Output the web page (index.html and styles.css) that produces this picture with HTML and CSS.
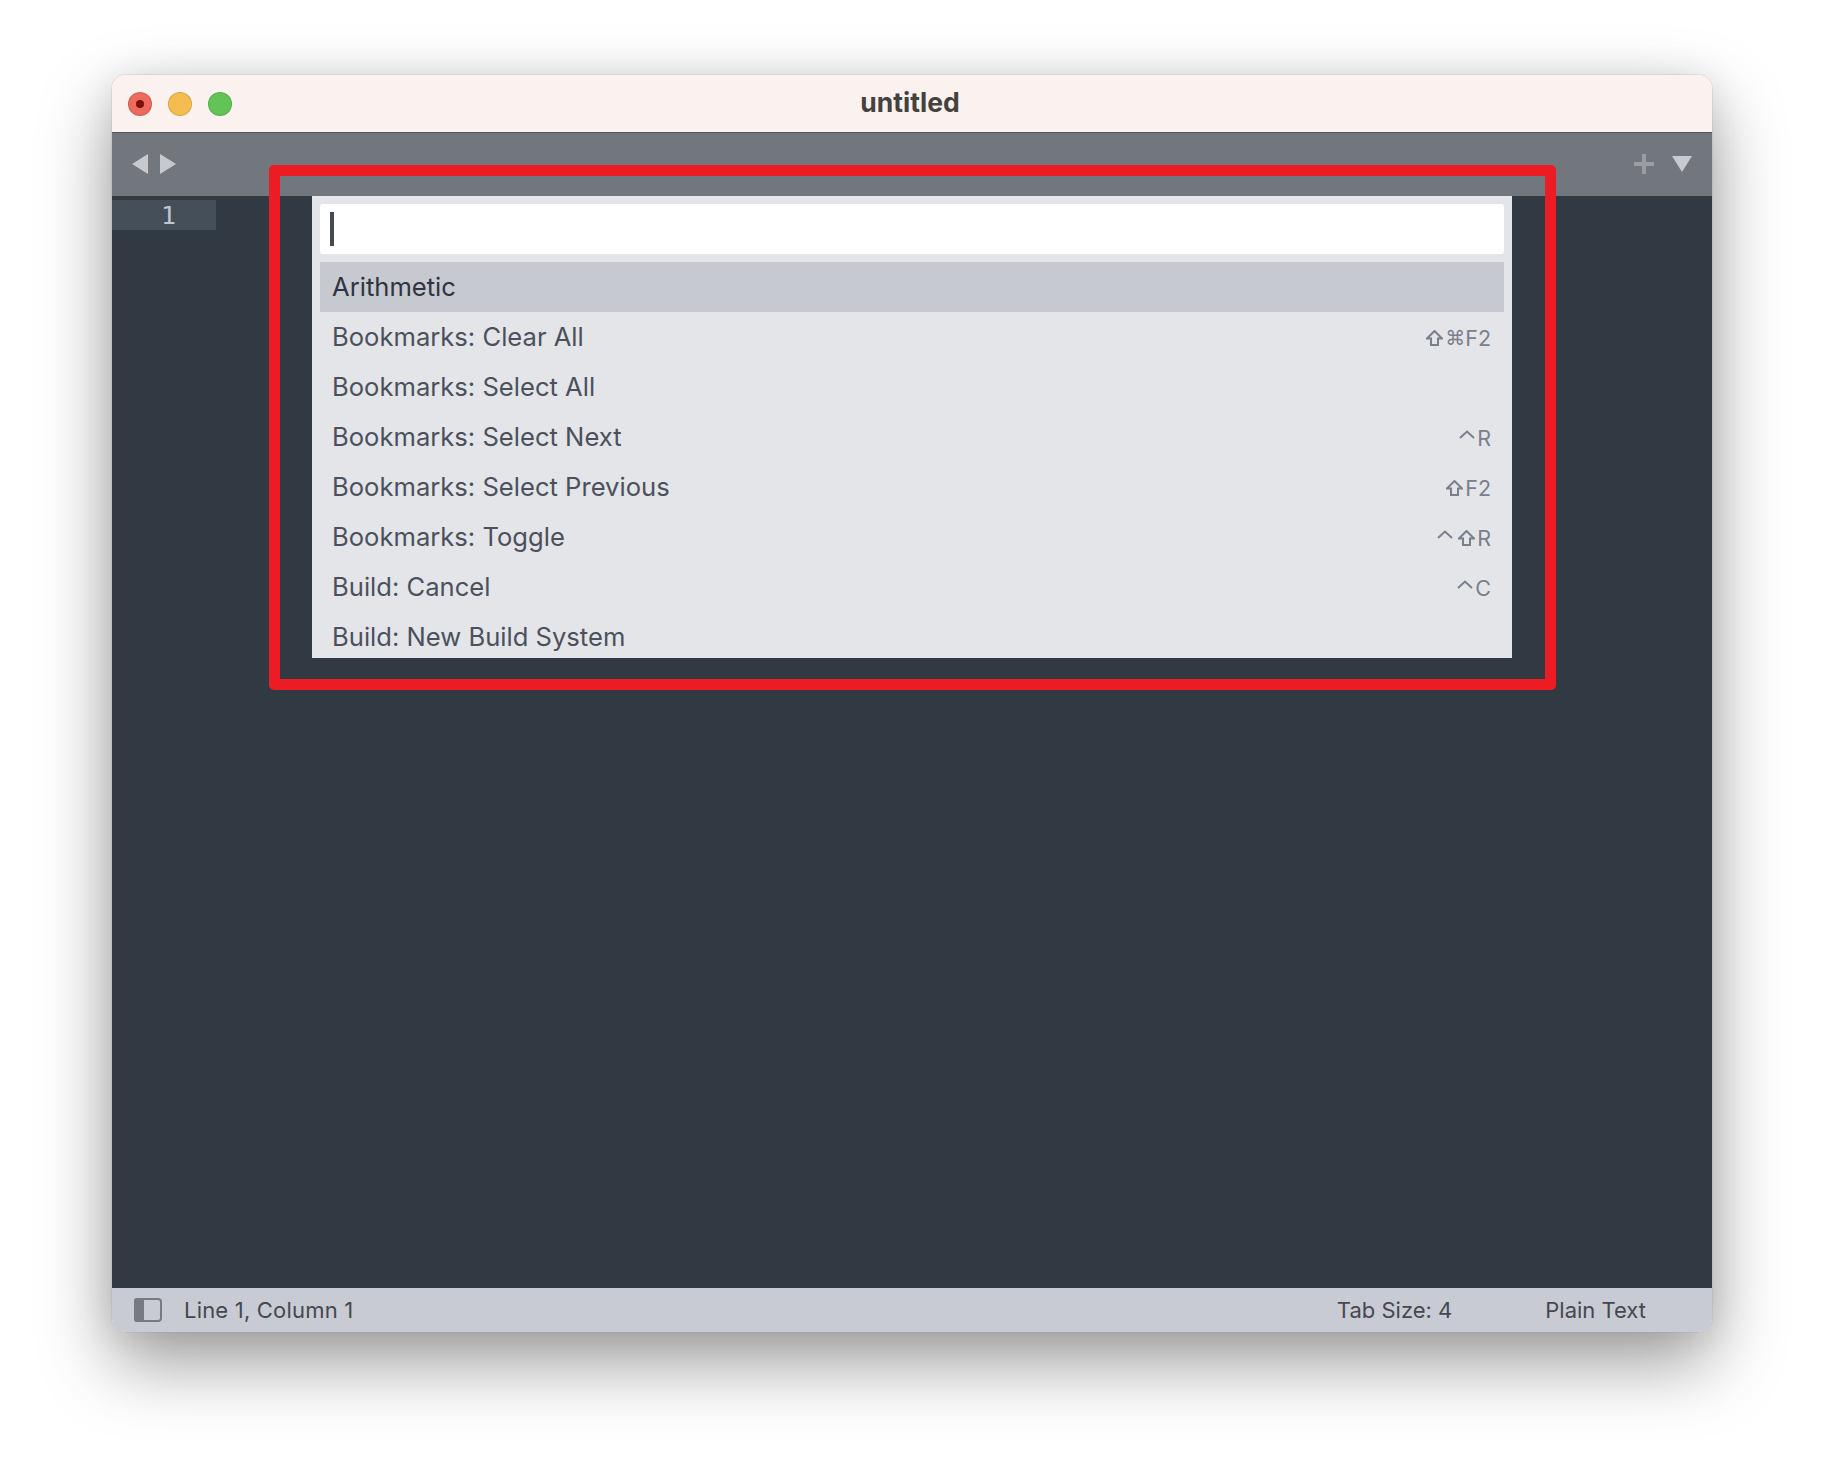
FILE: index.html
```html
<!DOCTYPE html>
<html lang="en">
<head>
<meta charset="utf-8">
<title>untitled</title>
<link rel="stylesheet" href="styles.css">
</head>
<body>
<main class="window">
  <header class="titlebar">
    <div class="lights">
      <span class="light light-close"><span class="light-dot"></span></span>
      <span class="light light-min"></span>
      <span class="light light-max"></span>
    </div>
    <div class="title">untitled</div>
    <div class="titlebar-end"></div>
  </header>
  <div class="tabbar">
    <div class="nav">
      <svg class="icon-nav" width="16" height="20" viewBox="0 0 16 20"><path d="M0 10 16 0V20Z"/></svg>
      <svg class="icon-nav" width="16" height="20" viewBox="0 0 16 20"><path d="M16 10 0 0V20Z"/></svg>
    </div>
    <div class="tab-actions">
      <svg class="icon-plus" width="20" height="20" viewBox="0 0 20 20"><path d="M8 0h4v8h8v4h-8v8H8v-8H0V8h8Z"/></svg>
      <svg class="icon-down" width="20" height="16" viewBox="0 0 20 16"><path d="M0 0H20L10 16Z"/></svg>
    </div>
  </div>
  <div class="editor">
    <div class="gutter-line">1</div>
  </div>
  <footer class="statusbar">
    <svg class="icon-sidebar" width="28" height="24" viewBox="0 0 28 24">
      <rect x="1" y="1" width="26" height="22" rx="3" fill="none" stroke="#777b81" stroke-width="2"/>
      <path d="M3 0H10V24H3A3 3 0 0 1 0 21V3A3 3 0 0 1 3 0Z" fill="#777b81"/>
    </svg>
    <span class="status-pos">Line 1, Column 1</span>
    <span class="status-tab">Tab Size: 4</span>
    <span class="status-syntax">Plain Text</span>
  </footer>

  <section class="palette">
    <div class="palette-input"><span class="caret"></span></div>
    <ul class="palette-list">
      <li class="row row-selected"><span>Arithmetic</span></li>
      <li class="row"><span>Bookmarks: Clear All</span>
        <span class="keys"><svg class="k-shift" width="17" height="16" viewBox="0 0 17 16"><path d="M8.5 1 16 8.5H12V15H5V8.5H1Z"/></svg><span class="k-cmd">⌘</span>F2</span></li>
      <li class="row"><span>Bookmarks: Select All</span></li>
      <li class="row"><span>Bookmarks: Select Next</span>
        <span class="keys"><svg class="k-ctrl" width="16" height="9" viewBox="0 0 16 9"><path d="M1 8 8 1.500 15 8"/></svg>R</span></li>
      <li class="row"><span>Bookmarks: Select Previous</span>
        <span class="keys"><svg class="k-shift" width="17" height="16" viewBox="0 0 17 16"><path d="M8.5 1 16 8.5H12V15H5V8.5H1Z"/></svg>F2</span></li>
      <li class="row"><span>Bookmarks: Toggle</span>
        <span class="keys"><svg class="k-ctrl k-ctrl-gap" width="16" height="9" viewBox="0 0 16 9"><path d="M1 8 8 1.500 15 8"/></svg><svg class="k-shift" width="17" height="16" viewBox="0 0 17 16"><path d="M8.5 1 16 8.500H12V15H5V8.500H1Z"/></svg>R</span></li>
      <li class="row"><span>Build: Cancel</span>
        <span class="keys"><svg class="k-ctrl" width="16" height="9" viewBox="0 0 16 9"><path d="M1 8 8 1.500 15 8"/></svg>C</span></li>
      <li class="row"><span>Build: New Build System</span></li>
    </ul>
  </section>

  <div class="annotation"></div>
</main>
</body>
</html>
```

FILE: styles.css
```css
* { box-sizing: border-box; }
html, body { margin: 0; background: #fff; }
body {
  width: 1824px;
  height: 1480px;
  padding: 75px 112px 0;
  font-family: Inter, "Liberation Sans", sans-serif;
  overflow: hidden;
}
.window {
  position: relative;
  width: 1600px;
  height: 1257px;
  display: flex;
  flex-direction: column;
  border-radius: 14px;
  box-shadow: 0 0 0 1px rgba(150, 150, 150, .18), 0 30px 72px rgba(0, 0, 0, .4), 0 0 36px rgba(0, 0, 0, .07);
}
.titlebar {
  flex: 0 0 58px;
  display: grid;
  grid-template-columns: 1fr auto 1fr;
  align-items: center;
  background: #fbf1ee;
  border-bottom: 1px solid #54575c;
  border-radius: 14px 14px 0 0;
}
.lights { display: flex; gap: 16px; padding-left: 16px; }
.light {
  width: 24px;
  height: 24px;
  border-radius: 50%;
  display: flex;
  align-items: center;
  justify-content: center;
  border: 1px solid rgba(0, 0, 0, .12);
}
.light-close { background: #ee6a5f; }
.light-min { background: #f5bd4f; }
.light-max { background: #61c454; }
.light-dot { width: 8px; height: 8px; border-radius: 50%; background: #7c0f08; }
.title {
  font-size: 26.500px;
  font-weight: 700;
  color: #45413f;
  margin-right: 4px;
  margin-top: -3px;
}
.tabbar {
  flex: 0 0 63px;
  display: flex;
  align-items: flex-start;
  justify-content: space-between;
  padding: 21px 20px 0;
  background: #72767d;
}
.nav { display: flex; gap: 12px; }
.icon-nav { fill: #c7c9cc; display: block; }
.tab-actions { display: flex; gap: 18px; }
.icon-plus { fill: #9a9da2; display: block; }
.icon-down { fill: #c7cbcf; display: block; margin-top: 2px; }
.editor {
  flex: 1;
  background: #313943;
  padding-top: 4px;
}
.gutter-line {
  width: 104px;
  height: 30px;
  padding-left: 49px;
  background: #454f59;
  color: #c0c6d0;
  font-family: "DejaVu Sans Mono", monospace;
  font-size: 25px;
  line-height: 32px;
}
.statusbar {
  flex: 0 0 44px;
  display: flex;
  align-items: center;
  padding-left: 22px;
  background: #c8cbd3;
  color: #45484f;
  font-size: 22px;
  border-radius: 0 0 14px 14px;
}
.icon-sidebar { display: block; margin-right: 22px; }
.status-pos { letter-spacing: .2px; }
.status-tab { margin-left: auto; }
.status-syntax { margin-left: 93px; margin-right: 66px; }
.palette {
  position: absolute;
  left: 200px;
  top: 121px;
  width: 1200px;
  height: 462px;
  padding: 8px 8px 0;
  overflow: hidden;
  background: #e3e5e9;
}
.palette-input {
  height: 50px;
  margin-bottom: 8px;
  padding: 8px 10px;
  background: #fff;
  border-radius: 3px;
}
.caret { display: block; width: 4px; height: 34px; background: #45484f; }
.palette-list { margin: 0; padding: 0; list-style: none; }
.row {
  height: 50px;
  display: flex;
  align-items: center;
  justify-content: space-between;
  padding: 0 13px 2px 12px;
  color: #4c505c;
  font-size: 25.600px;
}
.row-selected { background: #c6c9d0; color: #2f3440; }
.keys {
  display: flex;
  align-items: center;
  gap: 2px;
  margin-top: 4px;
  color: #79808c;
  font-size: 21.500px;
}
.k-shift { fill: none; stroke: #79808c; stroke-width: 2; display: block; }
.k-ctrl { fill: none; stroke: #79808c; stroke-width: 2; display: block; margin-top: -8px; }
.k-ctrl-gap { margin-right: 3px; }
.k-cmd { font-family: "DejaVu Sans", sans-serif; font-size: 20px; margin-right: -2px; }
.annotation {
  position: absolute;
  left: 157px;
  top: 90px;
  width: 1287px;
  height: 525px;
  border: 11px solid #ed1c24;
  border-radius: 5px;
}
```
